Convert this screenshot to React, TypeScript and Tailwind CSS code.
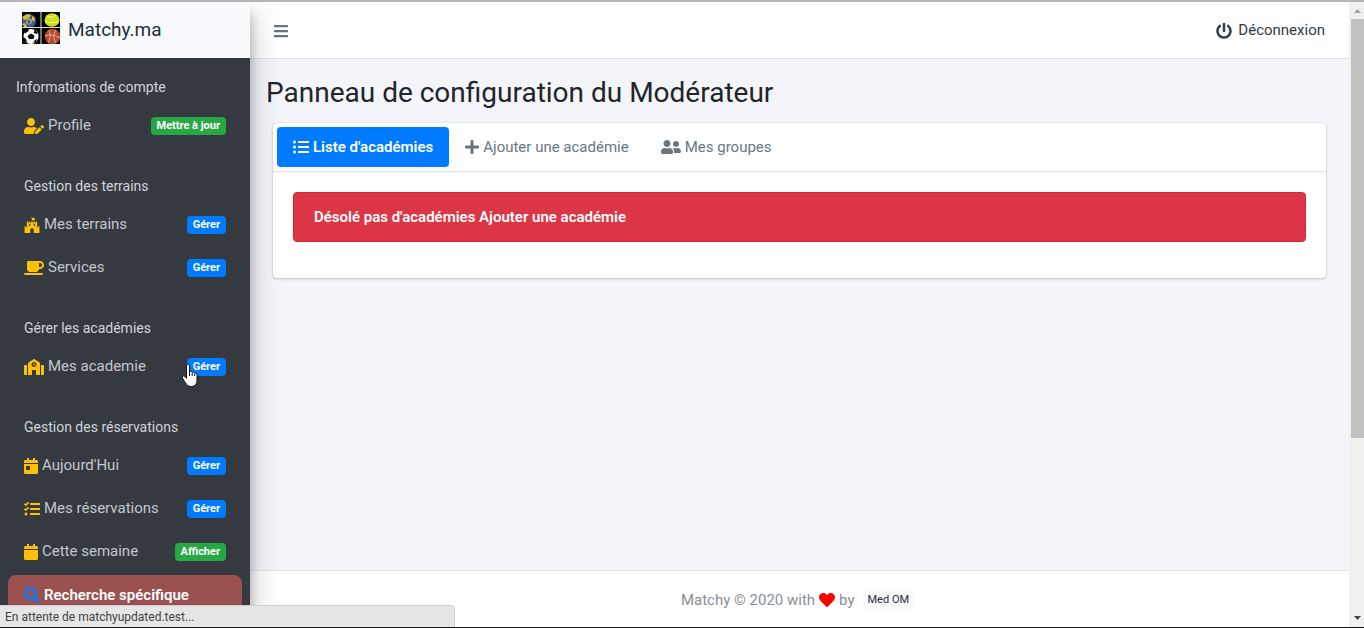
import type { ReactNode } from 'react';
import {
  FaBars,
  FaCalendar,
  FaCalendarDay,
  FaCoffee,
  FaFortAwesome,
  FaHeart,
  FaListUl,
  FaPlus,
  FaPowerOff,
  FaSchool,
  FaSearch,
  FaTasks,
  FaUserEdit,
  FaUserFriends,
} from 'react-icons/fa';

type NavItem = {
  label: string;
  icon: ReactNode;
  badge: string;
  color: 'blue' | 'green';
};

type NavSection = {
  title: string;
  items: NavItem[];
};

const sections: NavSection[] = [
  {
    title: 'Informations de compte',
    items: [
      { label: 'Profile', icon: <FaUserEdit className="h-4 w-5" />, badge: 'Mettre à jour', color: 'green' },
    ],
  },
  {
    title: 'Gestion des terrains',
    items: [
      { label: 'Mes terrains', icon: <FaFortAwesome className="h-4 w-4" />, badge: 'Gérer', color: 'blue' },
      { label: 'Services', icon: <FaCoffee className="h-4 w-5" />, badge: 'Gérer', color: 'blue' },
    ],
  },
  {
    title: 'Gérer les académies',
    items: [
      { label: 'Mes academie', icon: <FaSchool className="h-4 w-5" />, badge: 'Gérer', color: 'blue' },
    ],
  },
  {
    title: 'Gestion des réservations',
    items: [
      { label: "Aujourd'Hui", icon: <FaCalendarDay className="h-4 w-3.5" />, badge: 'Gérer', color: 'blue' },
      { label: 'Mes réservations', icon: <FaTasks className="h-4 w-4" />, badge: 'Gérer', color: 'blue' },
      { label: 'Cette semaine', icon: <FaCalendar className="h-4 w-3.5" />, badge: 'Afficher', color: 'green' },
    ],
  },
];

const badgeColors = {
  blue: 'bg-[#007bff]',
  green: 'bg-[#28a745]',
};

const Logo = () => (
  <svg viewBox="0 0 38 32" className="h-8 w-[38px]" aria-hidden="true">
    <rect width="38" height="32" fill="#050505" />
    {/* volleyball */}
    <circle cx="7" cy="9" r="7" fill="#3d5a9e" />
    <path d="M0 5l5-3 4 1-2 3-5 2zM0 12l3-1 2 3-2 2zM10 4l3 2-1 4-2-2z" fill="#d9c132" />
    <circle cx="7" cy="9.500" r="3" fill="#c9b440" />
    <path d="M5 8l3 0 1 3-3 1z" fill="#3d5a9e" />
    {/* tennis ball */}
    <ellipse cx="30" cy="8" rx="7.5" ry="6.800" fill="#cfdf1c" />
    <path d="M23 9c5 3 11 1 14 1M25 4c3 2 6 1 9-1" fill="none" stroke="#f4f8b0" strokeWidth="1" />
    {/* football */}
    <circle cx="9" cy="24.500" r="7.500" fill="#fff" />
    <path d="M9 21.500l3.500 2-1 3.500H7l-1.500-3zM3 18l4-.5-1 2-3 2zM12 18l3 2v2l-3-1zM1.500 25l2.500 2 1 3-2.500-1zM13 28l2-1-1 3-3 1z" fill="#080808" />
    {/* basketball */}
    <circle cx="30.500" cy="24.500" r="7.800" fill="#b5472b" />
    <path d="M23 24c5-2 10-1 15 2M27 18c2 5 1 10-1 13M34 18c-3 4-3 9 0 13" fill="none" stroke="#f0c6b4" strokeWidth=".8" />
    <path d="M19 0v32M0 15.500h38" stroke="#ddd" strokeWidth="1" />
  </svg>
);

const HandCursor = () => (
  <svg viewBox="0 0 18 24" className="pointer-events-none absolute -bottom-3 -left-1.5 h-6 w-[18px]" aria-hidden="true">
    <path
      d="M5.500 2c0-2 3-2 3 0v6c.5-1 2.500-.8 2.700.5.700-.8 2.300-.4 2.400.8.900-.6 2.400-.1 2.400 1.400V16c0 3-1.500 6.500-5.500 6.500-4.500 0-6-3.500-9-8.500-.8-1.500.7-2.700 2-1.700l2 2z"
      fill="#fff"
      stroke="#111"
      strokeWidth="1"
      strokeLinejoin="round"
    />
    <path d="M8.500 8v4M11.200 9v3M13.600 10v2" stroke="#111" strokeWidth="1" />
  </svg>
);

const SidebarLink = ({ item }: { item: NavItem }) => (
  <a href="#" className="mx-2 mb-1 flex h-[39px] items-center px-4 text-[15px] text-[#c2c7d0]">
    <span className="mr-1 text-[#ffc107]">{item.icon}</span>
    {item.label}
    <span className="relative ml-auto">
      <span
        className={`block rounded px-1.5 text-[11px] leading-[18px] font-bold text-white ${badgeColors[item.color]}`}
      >
        {item.badge}
      </span>
      {item.label === 'Mes academie' && <HandCursor />}
    </span>
  </a>
);

const Sidebar = () => (
  <aside className="relative z-10 flex w-[250px] shrink-0 flex-col overflow-hidden bg-[#343a40] shadow-[0_14px_28px_rgba(0,0,0,0.25),0_10px_10px_rgba(0,0,0,0.22)]">
    <a href="#" className="flex h-14 shrink-0 items-center gap-2 bg-[#f8f9fc] pl-[22px] text-[19px] text-[#1f2d3d]">
      <span className="pb-1">
        <Logo />
      </span>
      Matchy.ma
    </a>
    <nav>
      {sections.map((section, index) => (
        <section key={section.title}>
          <h2
            className={`pb-[9px] text-sm leading-5 text-[#d0d4db] ${
              index === 0 ? 'pt-[19px] pl-4' : 'pt-[27px] pl-6'
            }`}
          >
            {section.title}
          </h2>
          {section.items.map(item => (
            <SidebarLink key={item.label} item={item} />
          ))}
        </section>
      ))}
      <a
        href="#"
        className="mx-2 flex h-10 items-center gap-1 rounded-t-lg bg-[#9b5050] px-4 text-[15px] font-semibold text-white"
      >
        <FaSearch className="h-4 w-4 text-[#007bff]" />
        Recherche spécifique
      </a>
    </nav>
  </aside>
);

const Tabs = () => (
  <div role="tablist" className="flex border-b border-[#dfdfdf] p-1 text-[15px] text-[#6c757d]">
    <button
      type="button"
      role="tab"
      aria-selected="true"
      className="flex h-10 items-center gap-1 rounded bg-[#007bff] px-4 font-semibold text-white"
    >
      <FaListUl size={16} />
      Liste d'académies
    </button>
    <button type="button" role="tab" aria-selected="false" className="flex h-10 items-center gap-1 px-4">
      <FaPlus className="h-4 w-3.5" />
      Ajouter une académie
    </button>
    <button type="button" role="tab" aria-selected="false" className="flex h-10 items-center gap-1 px-4">
      <FaUserFriends className="h-4 w-5" />
      Mes groupes
    </button>
  </div>
);

const Scrollbar = () => (
  <div className="flex w-[15px] shrink-0 flex-col bg-[#f0f0f0] pl-0.5" aria-hidden="true">
    <div className="flex h-[17px] items-center justify-center">
      <svg viewBox="0 0 7 4" className="h-1 w-[7px]">
        <path d="M0 4L3.500 0 7 4z" fill="#a0a0a0" />
      </svg>
    </div>
    <div className="h-[67%] bg-[#c1c1c1]" />
    <div className="mt-auto flex h-[19px] items-center justify-center">
      <svg viewBox="0 0 7 4" className="h-1 w-[7px]">
        <path d="M0 0l3.500 4L7 0z" fill="#444" />
      </svg>
    </div>
  </div>
);

const App = () => (
  <div className="relative flex h-screen w-full overflow-hidden border-t-2 border-b border-t-[#b5b5b5] border-b-[#1a1a1a] font-[Roboto,sans-serif]">
    <Sidebar />

    <div className="flex min-w-0 flex-1 flex-col bg-[#f4f5fb]">
      <header className="flex h-[57px] shrink-0 items-center justify-between border-b border-[#dee2e6] bg-white px-6 pt-px text-[15px]">
        <button type="button" aria-label="Menu" className="text-[#6c757d]">
          <FaBars className="h-4 w-3.5" />
        </button>
        <a href="#" className="flex items-center gap-1.5 text-[#343a40]">
          <FaPowerOff size={16} />
          Déconnexion
        </a>
      </header>

      <main className="flex-1 pt-4 pr-[23px] pl-4">
        <h1 className="text-[28px] leading-9 text-[#212529]">Panneau de configuration du Modérateur</h1>
        <div className="mt-3 ml-[7px] rounded bg-white shadow-[0_0_1px_rgba(0,0,0,0.25),0_1px_3px_rgba(0,0,0,0.2)]">
          <Tabs />
          <div className="px-5 pt-5 pb-9">
            <div
              role="alert"
              className="rounded border border-[#d32535] bg-[#dc3545] px-5 py-3 text-[15px] leading-6 font-semibold text-white"
            >
              Désolé pas d'académies Ajouter une académie
            </div>
          </div>
        </div>
      </main>

      <footer className="flex h-[57px] shrink-0 items-center justify-center gap-1 border-t border-[#dee2e6] bg-white pt-0.5 pr-1 text-[15px] text-[#869099]">
        Matchy © 2020 with
        <FaHeart size={16} className="text-[#ff0000]" />
        by
        <span className="ml-1 rounded bg-[#f8f9fc] px-[5px] text-[11px] leading-[18px] text-[#1f2d3d]">Med OM</span>
      </footer>
    </div>

    <Scrollbar />

    <div className="absolute bottom-0 left-0 z-20 h-[22px] w-1/3 rounded-tr border-t border-r border-[#d0d0d0] bg-[#e6e6e6] pl-[5px] text-xs leading-[22px] text-[#444]">
      En attente de matchyupdated.test...
    </div>
  </div>
);

export default App;
